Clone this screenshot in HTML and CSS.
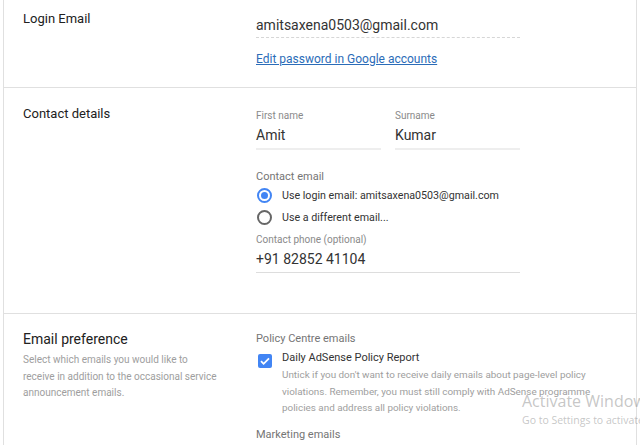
FILE: index.html
```
<!DOCTYPE html>
<html lang="en">
<head>
    <meta charset="UTF-8">
    <meta name="viewport" content="width=device-width, initial-scale=1.0">
    <title>Account information</title>
    <link rel="stylesheet" href="styles.css">
</head>
<body>
    <div class="card">
        <div class="section login">
            <div class="side">
                <h2>Login Email</h2>
            </div>
            <div class="main">
                <div class="email-value">amitsaxena0503@gmail.com</div>
                <a class="link" href="#">Edit password in Google accounts</a>
            </div>
        </div>

        <div class="section contact">
            <div class="side">
                <h2>Contact details</h2>
            </div>
            <div class="main">
                <div class="names">
                    <div class="field">
                        <div class="field-label">First name</div>
                        <div class="field-value">Amit</div>
                    </div>
                    <div class="field">
                        <div class="field-label">Surname</div>
                        <div class="field-value">Kumar</div>
                    </div>
                </div>

                <div class="group-label">Contact email</div>
                <div class="radio-row">
                    <span class="radio checked"></span>
                    <span>Use login email: amitsaxena0503@gmail.com</span>
                </div>
                <div class="radio-row">
                    <span class="radio"></span>
                    <span>Use a different email...</span>
                </div>

                <div class="field phone">
                    <div class="field-label">Contact phone (optional)</div>
                    <div class="field-value">+91 82852 41104</div>
                </div>
            </div>
        </div>

        <div class="section prefs">
            <div class="side">
                <h2 class="big">Email preference</h2>
                <p class="side-desc">Select which emails you would like to receive in addition to the occasional service announcement emails.</p>
            </div>
            <div class="main">
                <div class="group-label">Policy Centre emails</div>
                <div class="check-row">
                    <span class="checkbox">
                        <svg width="14" height="14" viewBox="0 0 14 14">
                            <path d="M3 7.2l2.6 2.6L11 4.4" fill="none" stroke="#fff" stroke-width="1.8"/>
                        </svg>
                    </span>
                    <div>
                        <div class="check-title">Daily AdSense Policy Report</div>
                        <p class="check-desc">Untick if you don't want to receive daily emails about page-level policy violations. Remember, you must still comply with AdSense programme policies and address all policy violations.</p>
                    </div>
                </div>
                <div class="group-label marketing">Marketing emails</div>
            </div>
        </div>
    </div>

    <div class="watermark">
        <div class="wm-title">Activate Windows</div>
        <div class="wm-sub">Go to Settings to activate Windows.</div>
    </div>
</body>
</html>
```

FILE: styles.css
```
body {
    margin: 0;
    font-family: Roboto, Arial, sans-serif;
    color: #212121;
    background: #fff;
    height: 445px;
    overflow: hidden;
    position: relative;
}
.card {
    margin: 0 3px;
    border-left: 1px solid #e0e0e0;
    border-right: 1px solid #e0e0e0;
}
.section {
    display: flex;
    border-bottom: 1px solid #e0e0e0;
}
.side {
    width: 252px;
    padding-left: 19px;
    box-sizing: border-box;
    flex-shrink: 0;
}
.main {
    width: 264px;
}
h2 {
    margin: 0;
    font-size: 13px;
    font-weight: 400;
    line-height: 16px;
    color: #212121;
}
h2.big {
    font-size: 14px;
    line-height: 18px;
}

/* login email */
.login {
    height: 88px;
    padding-top: 11px;
    box-sizing: border-box;
}
.email-value {
    margin-top: 4px;
    font-size: 14px;
    line-height: 20px;
    color: #333;
    border-bottom: 1px dashed #d6d6d6;
    padding-bottom: 2px;
}
.link {
    display: inline-block;
    margin-top: 13px;
    font-size: 12px;
    line-height: 16px;
    color: #2b6cb8;
}

/* contact details */
.contact {
    height: 226px;
    padding-top: 18px;
    box-sizing: border-box;
}
.names {
    display: flex;
    gap: 14px;
    margin-top: 3px;
}
.names .field {
    width: 125px;
}
.field-label {
    font-size: 10px;
    line-height: 14px;
    color: #8a8a8a;
}
.field-value {
    margin-top: 2px;
    font-size: 14px;
    line-height: 20px;
    color: #333;
    padding-bottom: 3px;
    border-bottom: 2px solid #eee;
}
.phone .field-value {
    padding-bottom: 3px;
    border-bottom: 1px solid #ddd;
}
.group-label {
    margin-top: 20px;
    font-size: 11px;
    line-height: 14px;
    color: #757575;
}
.radio-row {
    display: flex;
    align-items: center;
    height: 22px;
    font-size: 10.7px;
    color: #333;
}
.radio-row:first-of-type {
    margin-top: 1px;
}
.radio {
    width: 15px;
    height: 15px;
    box-sizing: border-box;
    border: 2px solid #666;
    border-radius: 50%;
    margin: 0 10px 0 1px;
    position: relative;
}
.radio.checked {
    border-color: #4285f4;
}
.radio.checked::after {
    content: "";
    position: absolute;
    left: 2px;
    top: 2px;
    width: 7px;
    height: 7px;
    border-radius: 50%;
    background: #4285f4;
}
.phone {
    margin-top: 5px;
}

/* email preference */
.prefs {
    padding-top: 16px;
    height: 200px;
    box-sizing: border-box;
}
.side-desc {
    margin: 4px 0 0;
    width: 198px;
    font-size: 10px;
    line-height: 16.5px;
    color: #9e9e9e;
}
.prefs .group-label {
    margin-top: 2px;
}
.check-row {
    display: flex;
    margin-top: 3px;
}
.checkbox {
    width: 14px;
    height: 14px;
    margin: 5px 10px 0 2px;
    border-radius: 2px;
    background: #4285f4;
    flex-shrink: 0;
    display: flex;
}
.check-title {
    font-size: 11px;
    line-height: 18px;
    color: #333;
}
.check-desc {
    margin: 0;
    width: 320px;
    font-size: 9.9px;
    line-height: 16.5px;
    color: #9e9e9e;
}
.prefs .marketing {
    margin-top: 11px;
}

/* windows watermark */
.watermark {
    position: absolute;
    left: 522px;
    top: 390px;
    white-space: nowrap;
    font-family: "Open Sans", sans-serif;
    color: rgba(150, 150, 150, 0.55);
}
.wm-title {
    font-size: 16px;
    line-height: 22px;
}
.wm-sub {
    font-size: 10.5px;
    line-height: 16px;
}
```
